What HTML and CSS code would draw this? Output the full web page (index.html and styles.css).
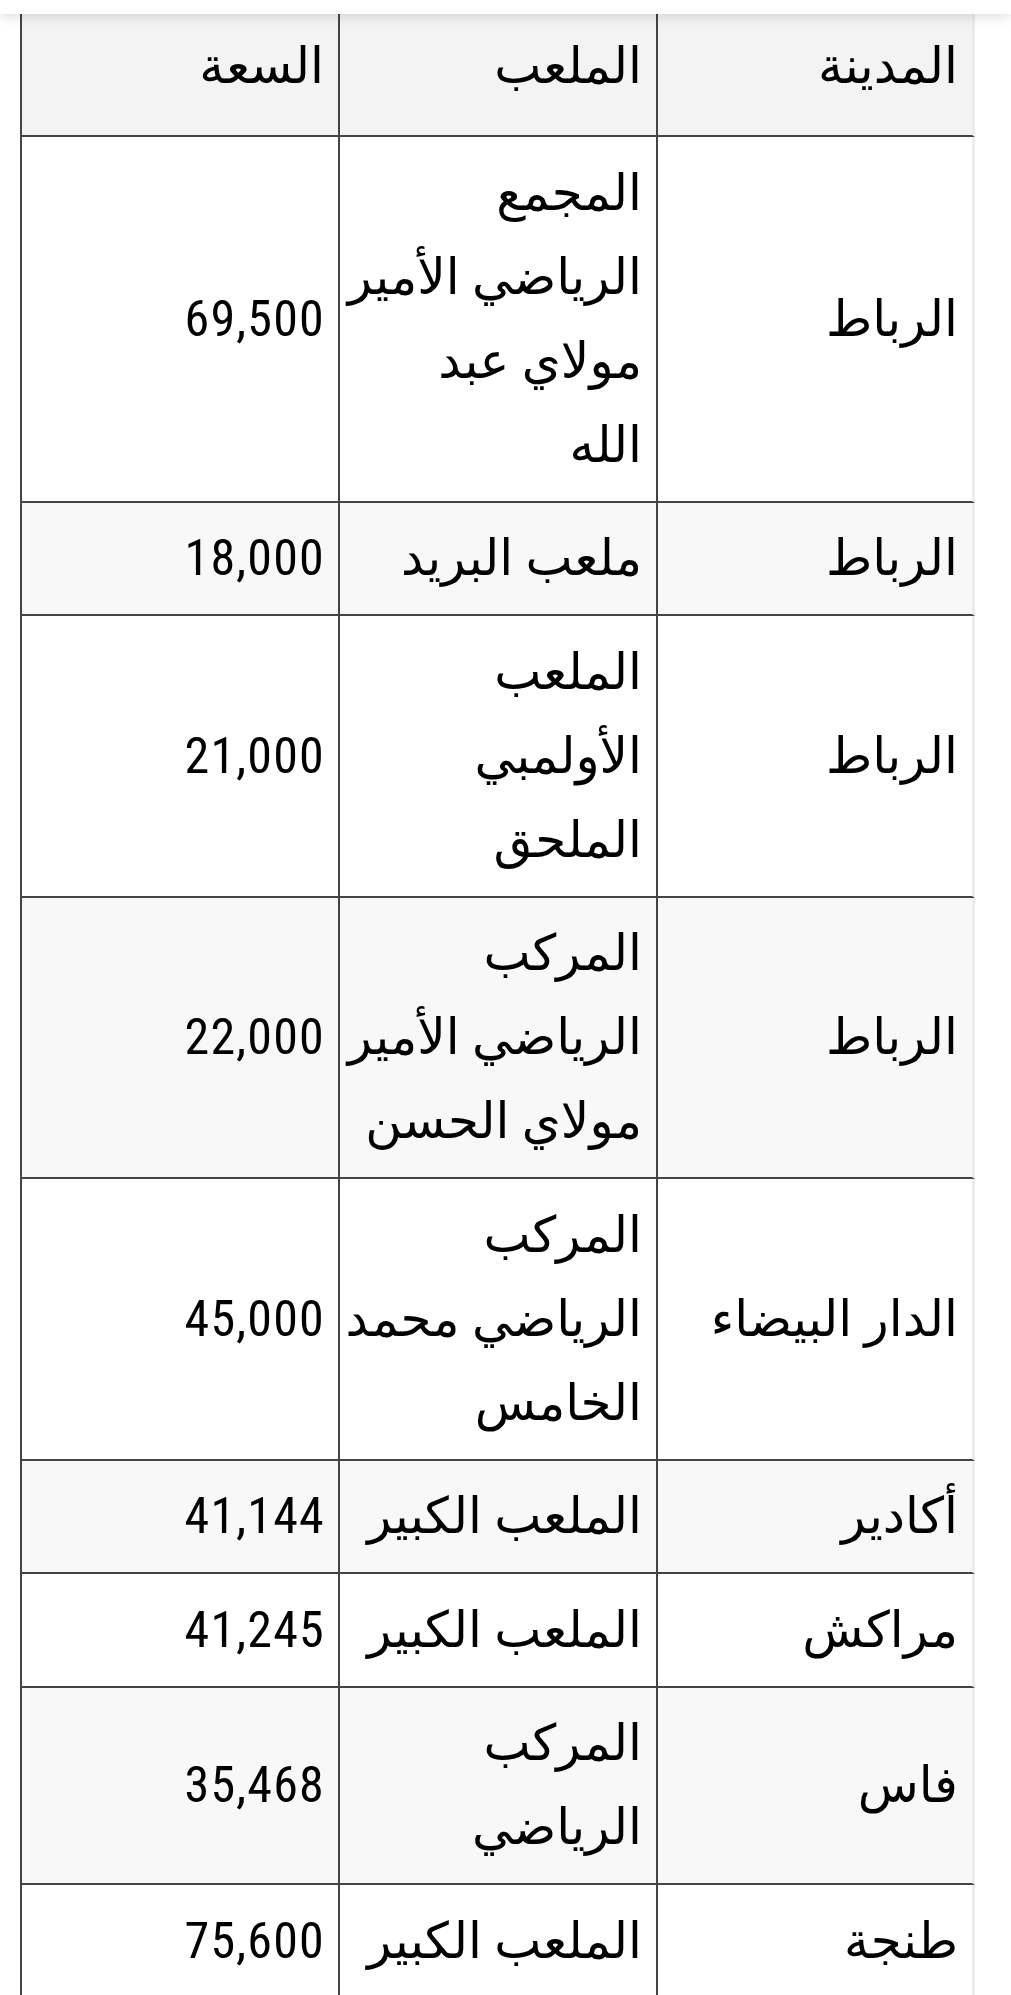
FILE: index.html
```html
<!DOCTYPE html>
<html lang="ar" dir="rtl">
<head>
<meta charset="utf-8">
<title>الملاعب</title>
<link rel="stylesheet" href="styles.css">
</head>
<body>
<div class="topbar"></div>
<div class="page">
<table class="stadiums">
  <thead>
    <tr><th>المدينة</th><th>الملعب</th><th>السعة</th></tr>
  </thead>
  <tbody>
    <tr><td>الرباط</td><td>المجمع<br>الرياضي الأمير<br>مولاي عبد<br>الله</td><td class="num">69,500</td></tr>
    <tr><td>الرباط</td><td>ملعب البريد</td><td class="num">18,000</td></tr>
    <tr><td>الرباط</td><td>الملعب<br>الأولمبي<br>الملحق</td><td class="num">21,000</td></tr>
    <tr><td>الرباط</td><td>المركب<br>الرياضي الأمير<br>مولاي الحسن</td><td class="num">22,000</td></tr>
    <tr><td>الدار البيضاء</td><td>المركب<br>الرياضي محمد<br>الخامس</td><td class="num">45,000</td></tr>
    <tr><td>أكادير</td><td>الملعب الكبير</td><td class="num">41,144</td></tr>
    <tr><td>مراكش</td><td>الملعب الكبير</td><td class="num">41,245</td></tr>
    <tr><td>فاس</td><td>المركب<br>الرياضي</td><td class="num">35,468</td></tr>
    <tr><td>طنجة</td><td>الملعب الكبير</td><td class="num">75,600</td></tr>
  </tbody>
</table>
</div>
</body>
</html>
```
FILE: styles.css
```css
html, body {
  margin: 0;
  padding: 0;
  background: #ffffff;
}

body {
  font-family: Roboto, "DejaVu Sans", sans-serif;
  color: #000000;
}

.topbar {
  position: absolute;
  top: 0;
  left: 0;
  right: 0;
  height: 14px;
  background: #ffffff;
  box-shadow: 0 3px 12px rgba(0, 0, 0, 0.13);
  z-index: 2;
}

.page {
  direction: ltr;
  padding: 10.5px 0 0 20px;
}

.stadiums {
  direction: rtl;
  width: 955px;
  table-layout: fixed;
  border-collapse: separate;
  border-spacing: 0;
  font-size: 50px;
  line-height: 84px;
}

.stadiums th,
.stadiums td {
  box-sizing: border-box;
  padding: 13.75px 14px;
  text-align: right;
  vertical-align: middle;
  font-weight: normal;
  border-left: 2px solid #444444;
  border-bottom: 2px solid #444444;
  white-space: nowrap;
}

.stadiums th {
  background: #f3f3f3;
  padding-top: 13.5px;
  padding-bottom: 27px;
}

.stadiums th:nth-child(1) { width: 319px; }
.stadiums th:nth-child(2) { width: 318px; }
.stadiums th:nth-child(3) { width: 318px; }

.stadiums th:first-child,
.stadiums td:first-child {
  border-right: 3px solid #ececec;
}

.stadiums tbody tr:nth-child(even) td {
  background: #f8f8f8;
}

.stadiums td.num {
  font-family: "Roboto Condensed", "Open Sans Condensed", Roboto, sans-serif;
  font-stretch: 82%;
  letter-spacing: 1.2px;
  padding-right: 13px;
}
```
